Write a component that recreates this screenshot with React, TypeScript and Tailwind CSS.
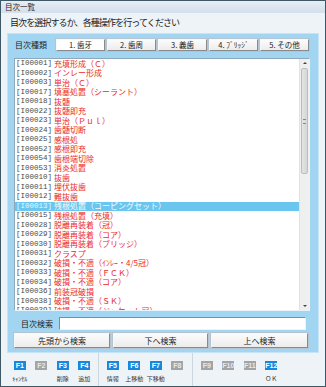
import React from 'react'

const JP = "font-['Noto_Sans_CJK_JP',sans-serif]"

const rows: [string, string][] = [
  ['I00001', '充填形成（Ｃ）'],
  ['I00002', 'インレー形成'],
  ['I00003', '単治（Ｃ）'],
  ['I00017', '填塞処置（シーラント）'],
  ['I00018', '抜髄'],
  ['I00022', '抜髄即充'],
  ['I00023', '単治（Ｐｕｌ）'],
  ['I00024', '歯髄切断'],
  ['I00025', '感根処'],
  ['I00052', '感根即充'],
  ['I00054', '歯根端切除'],
  ['I00053', '消炎処置'],
  ['I00010', '抜歯'],
  ['I00011', '埋伏抜歯'],
  ['I00012', '難抜歯'],
  ['I00013', '残根処置（コーピングセット）'],
  ['I00015', '残根処置（充填）'],
  ['I00028', '脱離再装着（冠）'],
  ['I00029', '脱離再装着（コア）'],
  ['I00030', '脱離再装着（ブリッジ）'],
  ['I00031', 'クラスプ'],
  ['I00032', '破損・不適（ｲﾝﾚｰ・4/5冠）'],
  ['I00033', '破損・不適（ＦＣＫ）'],
  ['I00034', '破損・不適（コア）'],
  ['I00036', '前装冠破損'],
  ['I00038', '破損・不適（ＳＫ）'],
  ['I00039', '破損・不適（ジャケット冠）'],
]

const tabs = ['1. 歯牙', '2. 歯周', '3. 義歯', '4. ﾌﾞﾘｯｼﾞ', '5. その他']

type FKey = { key: string; label: string; on: boolean }
const fgroups: FKey[][] = [
  [
    { key: 'F1', label: 'ｷｬﾝｾﾙ', on: true },
    { key: 'F2', label: '', on: false },
    { key: 'F3', label: '削除', on: true },
    { key: 'F4', label: '追加', on: true },
  ],
  [
    { key: 'F5', label: '情報', on: true },
    { key: 'F6', label: '上移動', on: true },
    { key: 'F7', label: '下移動', on: true },
    { key: 'F8', label: '', on: false },
  ],
  [
    { key: 'F9', label: '', on: false },
    { key: 'F10', label: '', on: false },
    { key: 'F11', label: '', on: false },
    { key: 'F12', label: 'ＯＫ', on: true },
  ],
]

const btn =
  'flex items-center justify-center border border-t-[#f8f8f8] border-l-[#f8f8f8] border-r-[#8a8a8a] border-b-[#8a8a8a] bg-gradient-to-b from-[#fbfbfb] to-[#ececec] text-[#222] shadow-[0_0_0_1px_#b4c4d0]'

function FCell({ k }: { k: FKey }) {
  return (
    <div className="flex w-[21.5px] flex-col items-center">
      <div
        className={`flex h-[9px] w-[12px] items-center justify-center text-[7px] font-bold leading-none font-['Liberation_Sans',sans-serif] ${
          k.on ? 'bg-[#1689dc] text-white' : 'bg-[#a4a4a4] text-[#e8e8e8]'
        }`}
      >
        {k.key}
      </div>
      <div className={`mt-[5px] h-[8px] whitespace-nowrap text-[6px] leading-[8px] text-[#333] ${JP}`}>{k.label}</div>
    </div>
  )
}

export default function App() {
  return (
    <div className={`flex h-[387px] w-[326px] flex-col border border-[#3e5866] bg-[#eef3f8] ${JP}`}>
      <div className="flex h-[12px] items-center bg-gradient-to-b from-[#e6edf5] to-[#d3dfeb] pl-[4px] text-[7.5px] text-[#222]">
        目次一覧
      </div>
      <div className="flex h-[20px] items-center pl-[9px] text-[9px] tracking-[-0.9px] text-[#222]">
        目次を選択するか、各種操作を行ってください
      </div>

      <div className="mx-[6px] flex h-[320px] flex-col border border-[#c6e4f6] bg-[#a2d5f1] px-[6px]">
        <div className="mt-[5px] flex h-[12px] items-center">
          <div className="w-[42px] pl-[1px] text-[8px] text-[#222]">目次種類</div>
          <div className="flex gap-[2px]">
            {tabs.map((t, i) => (
              <div
                key={t}
                className={`${btn} h-[12px] w-[49px] text-[7.5px] leading-none ${i === 0 ? 'from-white to-white' : ''}`}
              >
                {t}
              </div>
            ))}
          </div>
        </div>

        <div className="mt-[7px] flex h-[253px] w-[296px] border border-[#8fa8b8] border-b-[#e8f4fc] border-r-[#e8f4fc] bg-white">
          <div className="flex-1 overflow-hidden">
            {rows.map(([id, name], i) => {
              const sel = i === 15
              return (
                <div
                  key={id}
                  className={`flex h-[9.5px] items-center whitespace-nowrap pl-[1px] ${sel ? 'bg-[#6ac6ee]' : ''}`}
                >
                  <span
                    className={`w-[38px] text-[7.5px] leading-none font-['Liberation_Mono',monospace] ${
                      sel ? 'text-[#e8f6ff]' : 'text-[#4a4a4a]'
                    }`}
                  >
                    [{id}]
                  </span>
                  <span className={`text-[8px] leading-none ${sel ? 'text-[#f4fbff]' : 'text-[#ec2a2a]'}`}>{name}</span>
                </div>
              )
            })}
          </div>
          <div className="flex w-[10px] flex-col border-l border-[#e2e2e2] bg-[#efefef]">
            <div className="flex h-[8px] items-center justify-center">
              <div className="h-0 w-0 border-x-[2px] border-b-[2px] border-x-transparent border-b-[#444]" />
            </div>
            <div className="mx-[1px] mt-[1px] flex h-[106px] items-center justify-center rounded-[2px] border border-[#bdbdbd] bg-gradient-to-r from-[#e4e4e4] to-[#d6d6d6]">
              <div className="h-[5px] w-[3px] border-y border-[#888]" />
            </div>
            <div className="flex-1" />
            <div className="flex h-[8px] items-center justify-center">
              <div className="h-0 w-0 border-x-[2px] border-t-[2px] border-x-transparent border-t-[#444]" />
            </div>
          </div>
        </div>

        <div className="mt-[6px] flex h-[13px] items-center">
          <div className="w-[45px] whitespace-nowrap pl-[7px] text-[8px] leading-none text-[#222]">目次検索</div>
          <div className="h-[13px] w-[247px] border border-[#7e8e98] border-b-[#e8f4fc] border-r-[#e8f4fc] bg-white" />
        </div>

        <div className="mt-[3px] flex gap-[3px]">
          <div className={`${btn} h-[15px] w-[96px] text-[8px]`}>先頭から検索</div>
          <div className={`${btn} h-[15px] w-[95px] text-[8px]`}>下へ検索</div>
          <div className={`${btn} h-[15px] w-[97px] text-[8px]`}>上へ検索</div>
        </div>
      </div>

      <div className="flex flex-1 items-stretch pl-[8px]">
        <div className="flex pt-[8px]">
          {fgroups[0].map((k) => (
            <FCell key={k.key} k={k} />
          ))}
        </div>
        <div className="mx-[3px] w-px bg-[#ccd6de]" />
        <div className="flex pt-[8px]">
          {fgroups[1].map((k) => (
            <FCell key={k.key} k={k} />
          ))}
        </div>
        <div className="ml-[4px] mr-[3px] w-px bg-[#ccd6de]" />
        <div className="flex pt-[8px]">
          {fgroups[2].map((k) => (
            <FCell key={k.key} k={k} />
          ))}
        </div>
      </div>
    </div>
  )
}
